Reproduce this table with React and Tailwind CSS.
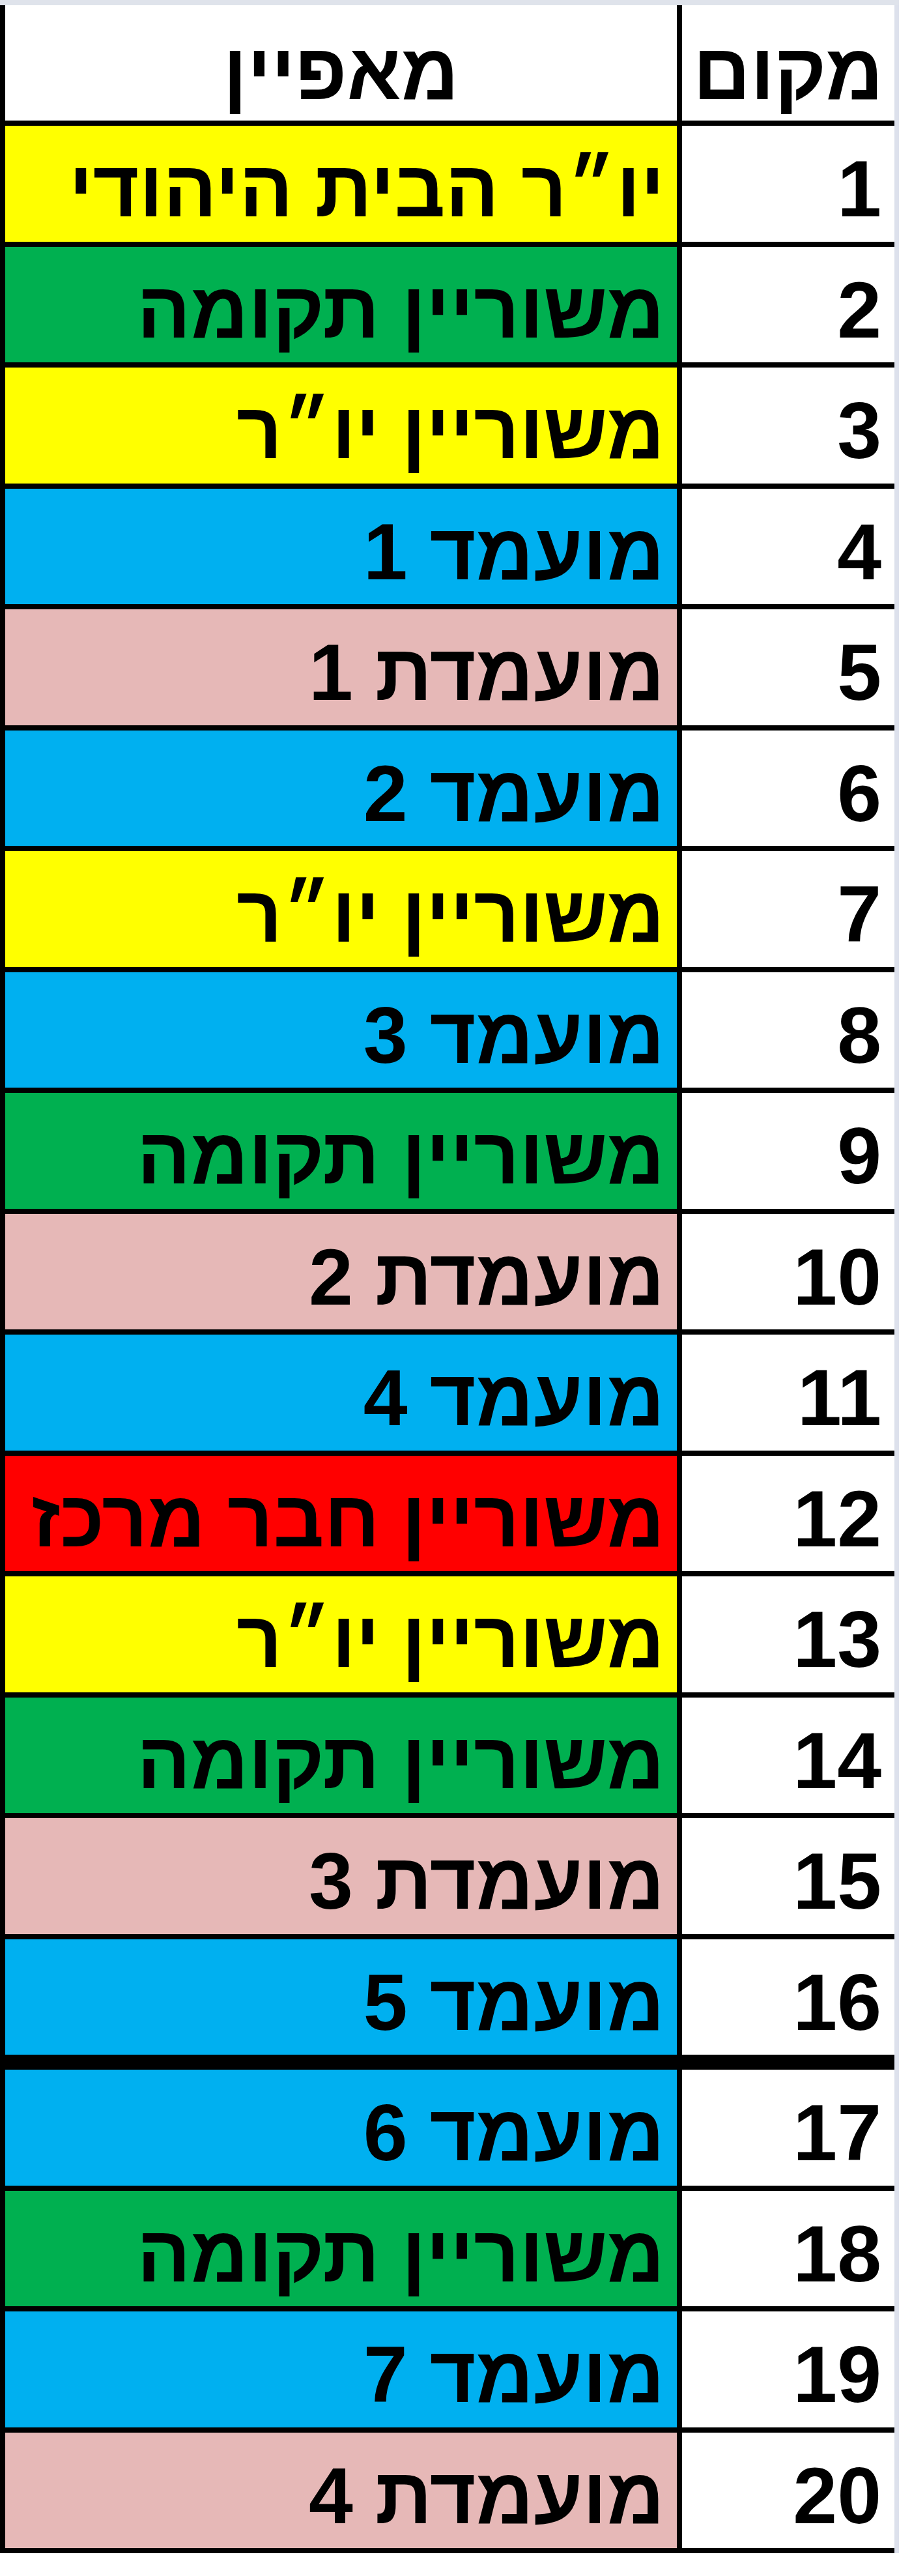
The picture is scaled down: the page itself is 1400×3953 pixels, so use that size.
import React from "react";

const rows = [
  { n: 1, label: "יו״ר הבית היהודי", bg: "bg-[#ffff00]" },
  { n: 2, label: "משוריין תקומה", bg: "bg-[#00b050]" },
  { n: 3, label: "משוריין יו״ר", bg: "bg-[#ffff00]" },
  { n: 4, label: "מועמד 1", bg: "bg-[#00b0f0]" },
  { n: 5, label: "מועמדת 1", bg: "bg-[#e6b8b7]" },
  { n: 6, label: "מועמד 2", bg: "bg-[#00b0f0]" },
  { n: 7, label: "משוריין יו״ר", bg: "bg-[#ffff00]" },
  { n: 8, label: "מועמד 3", bg: "bg-[#00b0f0]" },
  { n: 9, label: "משוריין תקומה", bg: "bg-[#00b050]" },
  { n: 10, label: "מועמדת 2", bg: "bg-[#e6b8b7]" },
  { n: 11, label: "מועמד 4", bg: "bg-[#00b0f0]" },
  { n: 12, label: "משוריין חבר מרכז", bg: "bg-[#ff0000]" },
  { n: 13, label: "משוריין יו״ר", bg: "bg-[#ffff00]" },
  { n: 14, label: "משוריין תקומה", bg: "bg-[#00b050]" },
  { n: 15, label: "מועמדת 3", bg: "bg-[#e6b8b7]" },
  { n: 16, label: "מועמד 5", bg: "bg-[#00b0f0]" },
  { n: 17, label: "מועמד 6", bg: "bg-[#00b0f0]" },
  { n: 18, label: "משוריין תקומה", bg: "bg-[#00b050]" },
  { n: 19, label: "מועמד 7", bg: "bg-[#00b0f0]" },
  { n: 20, label: "מועמדת 4", bg: "bg-[#e6b8b7]" },
];

const font = "font-['Liberation_Sans','DejaVu_Sans',sans-serif] font-bold leading-none text-black";

function Row({ n, label, bg }) {
  // the 16th row closes the first block with a heavy rule
  const rule = n === 16 ? "border-b-[23px] h-[200.5px]" : "border-b-8 h-[185.5px]";
  return (
    <div className={`flex box-border border-black ${rule}`}>
      <div className="w-[334px] shrink-0 flex items-center justify-start pr-5 pt-[17px] bg-white border-l-8 border-black">
        <span className={`${font} text-[122px]`}>{n}</span>
      </div>
      <div className={`flex-1 flex items-center justify-start pr-[19px] pt-[17px] ${bg}`}>
        <span className={`${font} text-[122px] whitespace-nowrap`}>{label}</span>
      </div>
    </div>
  );
}

export default function App() {
  return (
    <div className="w-[1400px] h-[3953px] bg-white">
      <div className="w-[1380px] h-2 bg-[#dfe3eb]" />
      <div className="flex w-[1380px]">
        <div dir="rtl" className="w-[1373px] border-l-8 border-black">
          <div className="flex h-[185px] box-border border-b-8 border-black">
            <div className="w-[334px] shrink-0 flex items-center justify-center pt-[26px] bg-white border-l-8 border-black">
              <span className={`${font} text-[122px]`}>מקום</span>
            </div>
            <div className="flex-1 flex items-center justify-center pt-[26px] bg-white">
              <span className={`${font} text-[122px]`}>מאפיין</span>
            </div>
          </div>
          {rows.map((r) => (
            <Row key={r.n} {...r} />
          ))}
        </div>
        <div className="w-[7px] bg-[#dde1ec]" />
      </div>
    </div>
  );
}
